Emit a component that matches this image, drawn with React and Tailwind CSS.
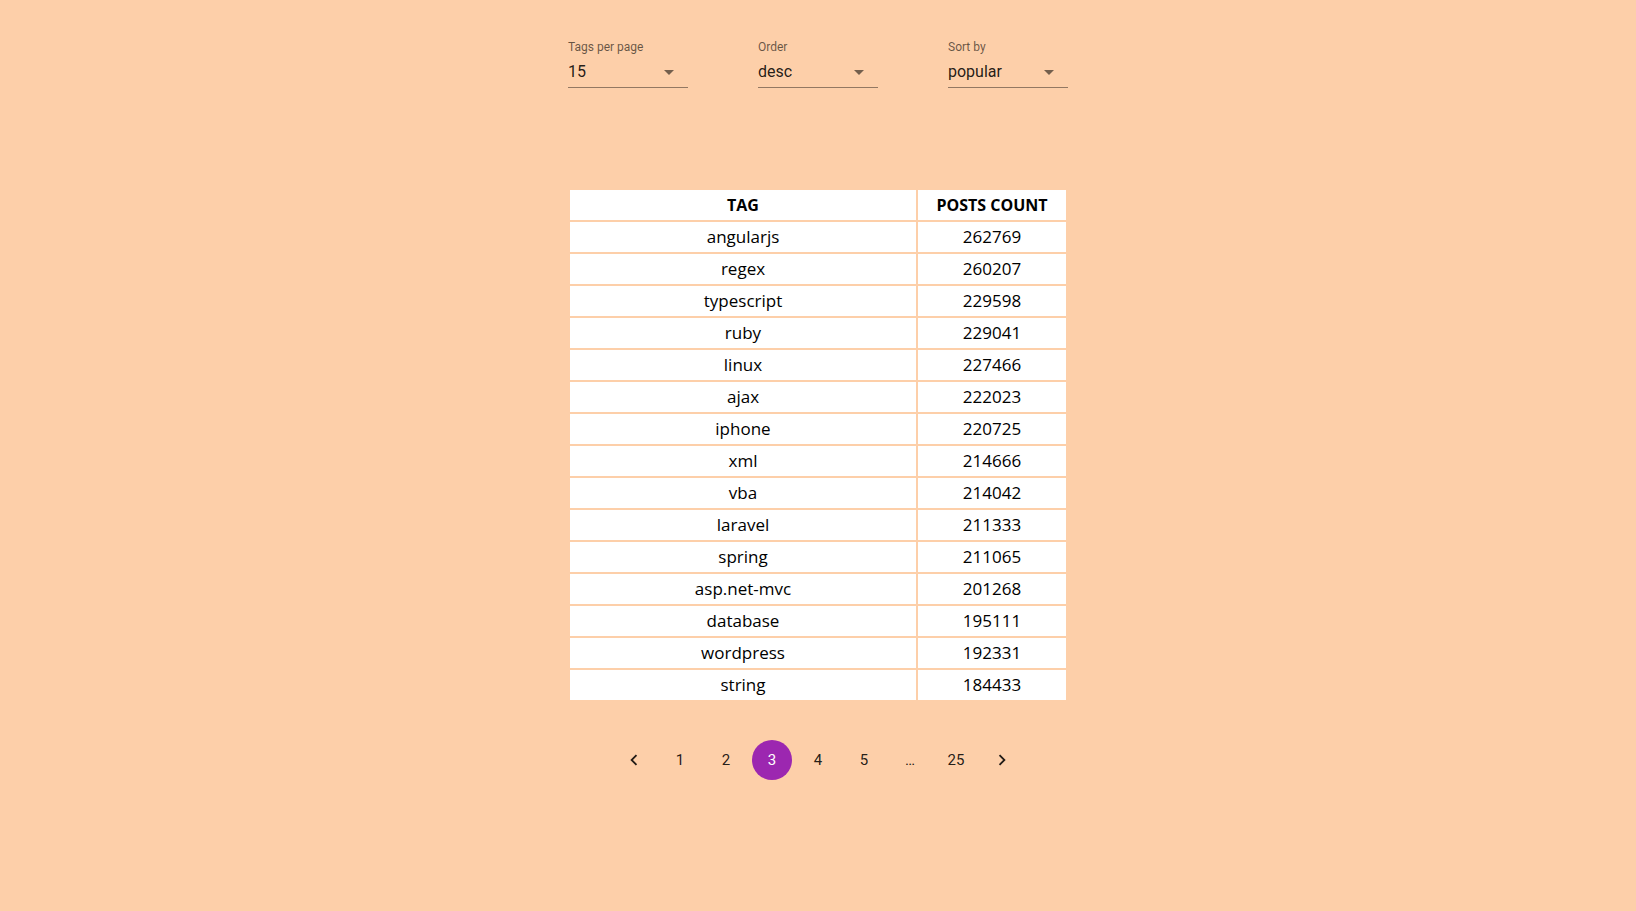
import { useState } from 'react';

const ROWS = [
  ['angularjs', 262769],
  ['regex', 260207],
  ['typescript', 229598],
  ['ruby', 229041],
  ['linux', 227466],
  ['ajax', 222023],
  ['iphone', 220725],
  ['xml', 214666],
  ['vba', 214042],
  ['laravel', 211333],
  ['spring', 211065],
  ['asp.net-mvc', 201268],
  ['database', 195111],
  ['wordpress', 192331],
  ['string', 184433],
];

const SELECTS = [
  { label: 'Tags per page', value: '15' },
  { label: 'Order', value: 'desc' },
  { label: 'Sort by', value: 'popular' },
];

const Select = ({ label, value }) => (
  <div className="w-[120px] flex flex-col">
    <span className="h-4 text-[12px] leading-4 text-[rgba(0,0,0,0.6)]">{label}</span>
    <div className="h-[33px] pt-[5px] pb-[4px] flex items-center justify-between border-b border-[rgba(0,0,0,0.42)]">
      <span className="text-base leading-[23px] text-[rgba(0,0,0,0.87)]">{value}</span>
      <svg viewBox="0 0 24 24" className="size-6 mr-[7px] fill-[rgba(0,0,0,0.54)]" aria-hidden>
        <path d="M7 10l5 5 5-5z" />
      </svg>
    </div>
  </div>
);

const Chevron = ({ dir }) => (
  <svg viewBox="0 0 24 24" className="size-[22px] fill-[rgba(0,0,0,0.87)]" aria-hidden>
    {dir === 'left' ? (
      <path d="M15.41 7.41 14 6l-6 6 6 6 1.41-1.41L10.83 12z" />
    ) : (
      <path d="M10 6 8.59 7.41 13.17 12l-4.58 4.59L10 18l6-6z" />
    )}
  </svg>
);

const PageButton = ({ children, active, onClick }) => (
  <button
    onClick={onClick}
    className={
      active
        ? 'size-10 rounded-full flex items-center justify-center text-[15px] bg-[#9c27b0] text-white'
        : 'size-10 rounded-full flex items-center justify-center text-[15px] text-[rgba(0,0,0,0.87)]'
    }
  >
    {children}
  </button>
);

export default function App() {
  const [page, setPage] = useState(3);
  const pages = [1, 2, 3, 4, 5];
  return (
    <div className="min-h-[911px] w-full bg-[#fdcfa9] flex flex-col items-center pt-[39px] font-['Roboto',sans-serif]">
      <div className="flex gap-[70px]">
        {SELECTS.map((s) => (
          <Select key={s.label} {...s} />
        ))}
      </div>

      <div className="mt-[102px] grid grid-cols-[346px_148px] gap-[2px] font-['Open_Sans',sans-serif] text-black">
        <div className="h-[30px] bg-white flex items-center justify-center font-bold text-base">TAG</div>
        <div className="h-[30px] bg-white flex items-center justify-center font-bold text-base">POSTS COUNT</div>
        {ROWS.map(([tag, count]) => (
          <div key={tag} className="contents">
            <div className="h-[30px] bg-white flex items-center justify-center text-[17px]">{tag}</div>
            <div className="h-[30px] bg-white flex items-center justify-center text-[17px]">{count}</div>
          </div>
        ))}
      </div>

      <nav className="mt-10 flex gap-[6px]">
        <PageButton onClick={() => setPage(Math.max(1, page - 1))}>
          <Chevron dir="left" />
        </PageButton>
        {pages.map((p) => (
          <PageButton key={p} active={p === page} onClick={() => setPage(p)}>
            {p}
          </PageButton>
        ))}
        <div className="size-10 flex items-center justify-center text-[15px] text-[rgba(0,0,0,0.87)]">…</div>
        <PageButton onClick={() => setPage(25)}>25</PageButton>
        <PageButton onClick={() => setPage(Math.min(25, page + 1))}>
          <Chevron dir="right" />
        </PageButton>
      </nav>
    </div>
  );
}
